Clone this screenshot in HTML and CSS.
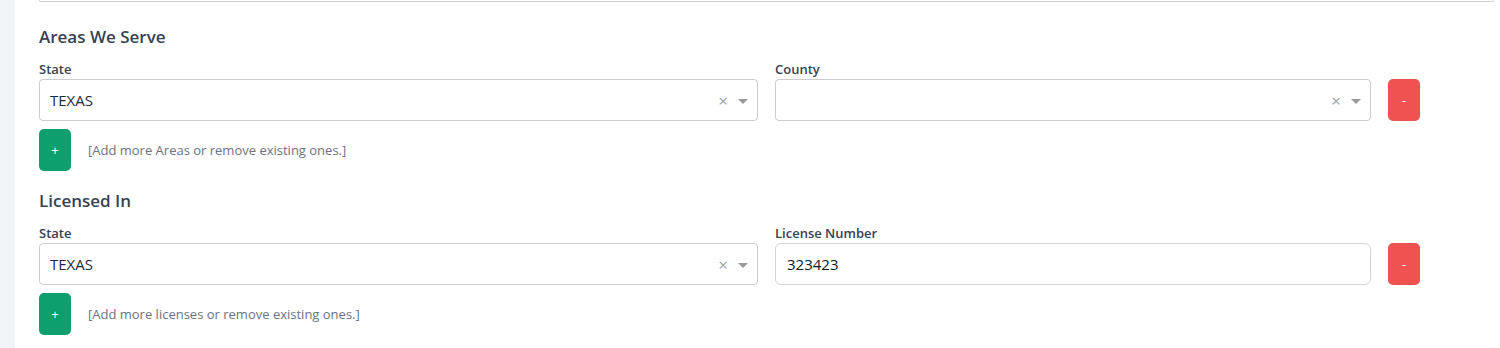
FILE: index.html
```html
<!DOCTYPE html>
<html lang="en">
<head>
    <meta charset="UTF-8">
    <title>Areas and Licenses</title>
    <link rel="stylesheet" href="styles.css">
</head>
<body>
    <div class="sidebar"></div>
    <div class="content">
        <div class="prev-box"></div>

        <h3 class="section-title">Areas We Serve</h3>
        <div class="field-row">
            <div class="field">
                <label>State</label>
                <div class="select">
                    <span class="value">TEXAS</span>
                    <span class="clear">&times;</span>
                    <span class="caret"></span>
                </div>
            </div>
            <div class="field">
                <label>County</label>
                <div class="select">
                    <span class="value"></span>
                    <span class="clear">&times;</span>
                    <span class="caret"></span>
                </div>
            </div>
            <button class="btn btn-remove">-</button>
        </div>
        <div class="add-row">
            <button class="btn btn-add">+</button>
            <span class="hint">[Add more Areas or remove existing ones.]</span>
        </div>

        <h3 class="section-title">Licensed In</h3>
        <div class="field-row">
            <div class="field">
                <label>State</label>
                <div class="select">
                    <span class="value">TEXAS</span>
                    <span class="clear">&times;</span>
                    <span class="caret"></span>
                </div>
            </div>
            <div class="field">
                <label>License Number</label>
                <input class="text-input" type="text" value="323423">
            </div>
            <button class="btn btn-remove">-</button>
        </div>
        <div class="add-row">
            <button class="btn btn-add">+</button>
            <span class="hint">[Add more licenses or remove existing ones.]</span>
        </div>
    </div>
</body>
</html>
```

FILE: styles.css
```css
body {
    margin: 0;
    font-family: "Open Sans", "Noto Sans", Arial, sans-serif;
    background-color: #fff;
    display: flex;
    min-height: 100vh;
}
.sidebar {
    width: 15px;
    background-color: #f1f4f8;
    flex-shrink: 0;
}
.content {
    flex: 1;
    padding: 0 6px 0 24px;
}
.prev-box {
    height: 1px;
    border: 1px solid #cfcfcf;
    border-top: none;
    border-radius: 0 0 4px 4px;
    margin-bottom: 23px;
}
.section-title {
    margin: 17px 0 11px;
    font-size: 17px;
    font-weight: 600;
    color: #374151;
    line-height: 24px;
}
.field-row {
    display: grid;
    grid-template-columns: 719px 596px 32px;
    column-gap: 17px;
    align-items: end;
}
.field label {
    display: block;
    font-size: 13px;
    font-weight: 600;
    color: #374151;
    line-height: 18px;
    margin-bottom: 1px;
}
.select {
    height: 40px;
    border: 1px solid #cccccc;
    border-radius: 4px;
    display: flex;
    align-items: center;
    padding: 0 9px 0 10px;
}
.select .value {
    flex: 1;
    font-size: 15px;
    color: #1f2937;
}
.select .clear {
    color: #9ca3af;
    font-size: 17px;
    margin-right: 10px;
}
.select .caret {
    width: 0;
    height: 0;
    border-left: 5px solid transparent;
    border-right: 5px solid transparent;
    border-top: 5px solid #999;
    margin-top: 2px;
}
.text-input {
    box-sizing: border-box;
    width: 100%;
    height: 42px;
    border: 1px solid #d1d5db;
    border-radius: 6px;
    padding: 0 11px;
    font-family: inherit;
    font-size: 15px;
    color: #111827;
    display: block;
}
.btn {
    width: 32px;
    height: 42px;
    border: none;
    border-radius: 5px;
    color: #fff;
    font-family: inherit;
    font-size: 13px;
    padding: 0;
    cursor: pointer;
}
.btn-remove {
    background-color: #f05252;
}
.btn-add {
    background-color: #0e9f6e;
}
.add-row {
    display: flex;
    align-items: center;
    gap: 17px;
    margin-top: 8px;
    margin-bottom: 18px;
}
.hint {
    font-size: 13px;
    color: #6b7280;
}
```
